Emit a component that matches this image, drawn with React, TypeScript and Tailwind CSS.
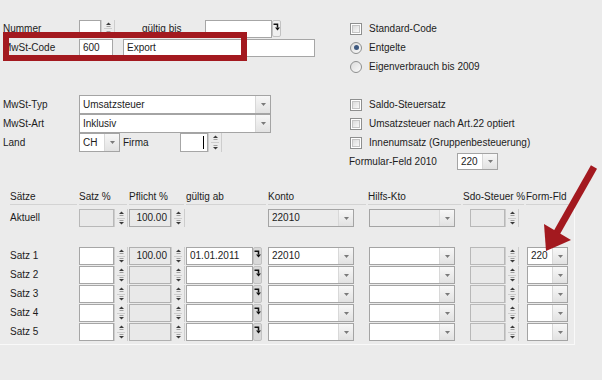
import React from 'react'

const RED = '#a3191f'

function Up() {
  return (
    <svg width="7" height="5" viewBox="0 0 7 5" className="block">
      <path d="M3.5 0.5 L6 3 H1 Z" fill="#3a3a3a" />
      <path d="M1.5 4.5 H5.5" stroke="#a0a0a0" strokeWidth="1" />
    </svg>
  )
}

function Down() {
  return (
    <svg width="7" height="5" viewBox="0 0 7 5" className="block">
      <path d="M1.5 0.5 H5.5" stroke="#a0a0a0" strokeWidth="1" />
      <path d="M1 2 H6 L3.5 4.5 Z" fill="#3a3a3a" />
    </svg>
  )
}

function Spin({ className = 'h-[18px]' }: { className?: string }) {
  return (
    <div className={`w-[14px] shrink-0 flex flex-col border-x border-[#cdcdcd] ${className}`}>
      <div className="flex-1 flex items-center justify-center">
        <Up />
      </div>
      <div className="mx-[2px] border-t border-[#cdcdcd]" />
      <div className="flex-1 flex items-center justify-center">
        <Down />
      </div>
    </div>
  )
}

function Box({ className, children }: { className: string; children?: React.ReactNode }) {
  return <div className={`h-[18px] shrink-0 flex items-center border px-[3px] ${className}`}>{children}</div>
}

function Combo({ className, value, disabled }: { className: string; value?: string; disabled?: boolean }) {
  return (
    <div className={`flex shrink-0 border border-[#a4a4a4] ${disabled ? 'bg-[#ebebeb]' : 'bg-white'} ${className}`}>
      <div className="flex-1 flex items-center pl-[3px]">{value}</div>
      <div className="w-[15px] flex items-center justify-center border-l border-[#d8d8d8] bg-linear-to-b from-[#f7f7f7] to-[#e2e2e2]">
        <svg width="5" height="3" viewBox="0 0 5 3">
          <path d="M0 0 H5 L2.5 3 Z" fill="#7a7a7a" />
        </svg>
      </div>
    </div>
  )
}

function DateBtn({ className }: { className: string }) {
  return (
    <div className={`w-[9px] shrink-0 rounded-[2px] bg-[#d9d9d9] border border-[#c2c2c2] flex justify-center pt-[2px] ${className}`}>
      <svg width="7" height="8" viewBox="0 0 7 8" className="block">
        <path d="M0.5 1.25 H4.5 V4.5" stroke="#111" strokeWidth="1.5" fill="none" />
        <path d="M2 4.5 H7 L4.5 7.5 Z" fill="#111" />
      </svg>
    </div>
  )
}

function Check() {
  return (
    <div className="w-[12px] h-[12px] shrink-0 border border-[#8e8f8f] bg-white p-[1px]">
      <div className="w-full h-full border border-[#c4c4c4] bg-linear-to-br from-[#dcdcdc] to-[#f8f8f8]" />
    </div>
  )
}

function Radio({ on }: { on?: boolean }) {
  return (
    <div className="w-[12px] h-[12px] shrink-0 rounded-full border border-[#8e8f8f] bg-linear-to-br from-[#dcdcdc] to-[#fafafa] flex items-center justify-center">
      {on && <div className="w-[5px] h-[5px] rounded-full bg-[#3d587f]" />}
    </div>
  )
}

const satzRows = [1, 2, 3, 4, 5]

export default function App() {
  return (
    <div className="relative w-[602px] h-[380px] overflow-hidden bg-[#ebebeb] text-[10px] leading-none text-[#1c1c1c] font-['Liberation_Sans',Arial,sans-serif]">
      {/* Kopf: Nummer / Code */}
      <div className="mt-[19px] flex">
        <div className="w-[350px] shrink-0 flex flex-col">
          <div className="h-[19px] flex items-center">
            <span className="w-[79px] pl-[3px] shrink-0">Nummer</span>
            <Box className="w-[22px] h-[17px] bg-white border-[#a6a6a6]" />
            <Spin className="h-[17px]" />
            <span className="ml-[27px] w-[63px] shrink-0">gültig bis</span>
            <Box className="w-[67px] h-[17px] bg-white border-[#a6a6a6]" />
            <DateBtn className="h-[17px] bg-[#f0f0f0]" />
          </div>
          <div className="h-[19px] flex items-center">
            <span className="w-[79px] pl-[3px] shrink-0">MwSt-Code</span>
            <Box className="w-[34px] bg-white border-[#a6a6a6]">600</Box>
            <Box className="ml-[10px] w-[192px] bg-white border-[#a6a6a6]">Export</Box>
          </div>
          <div className="h-[19px]" />
        </div>
        <div className="flex flex-col">
          <div className="h-[19px] flex items-center gap-[7px]">
            <Check />
            <span>Standard-Code</span>
          </div>
          <div className="h-[19px] flex items-center gap-[7px]">
            <Radio on />
            <span>Entgelte</span>
          </div>
          <div className="h-[19px] flex items-center gap-[7px]">
            <Radio />
            <span>Eigenverbrauch bis 2009</span>
          </div>
        </div>
      </div>

      {/* Typ / Art / Land */}
      <div className="mt-[19px] flex">
        <div className="w-[350px] shrink-0 flex flex-col">
          <div className="h-[19px] flex items-center">
            <span className="w-[79px] pl-[3px] shrink-0">MwSt-Typ</span>
            <Combo className="w-[192px] h-[19px]" value="Umsatzsteuer" />
          </div>
          <div className="h-[19px] flex items-center">
            <span className="w-[79px] pl-[3px] shrink-0">MwSt-Art</span>
            <Combo className="w-[192px] h-[19px]" value="Inklusiv" />
          </div>
          <div className="h-[19px] flex items-center">
            <span className="w-[79px] pl-[3px] shrink-0">Land</span>
            <Combo className="w-[41px] h-[19px]" value="CH" />
            <span className="ml-[3px] w-[57px] shrink-0">Firma</span>
            <Box className="w-[28px] h-[19px] bg-white border-[#a6a6a6] justify-end">
              <span className="w-[1px] h-[13px] bg-black" />
            </Box>
            <Spin className="h-[19px]" />
          </div>
          <div className="h-[19px]" />
        </div>
        <div className="flex flex-col">
          <div className="h-[19px] flex items-center gap-[7px]">
            <Check />
            <span>Saldo-Steuersatz</span>
          </div>
          <div className="h-[19px] flex items-center gap-[7px]">
            <Check />
            <span>Umsatzsteuer nach Art.22 optiert</span>
          </div>
          <div className="h-[19px] flex items-center gap-[7px]">
            <Check />
            <span>Innenumsatz (Gruppenbesteuerung)</span>
          </div>
          <div className="h-[19px] flex items-center -ml-[1px]">
            <span className="w-[108px] shrink-0">Formular-Feld 2010</span>
            <Combo className="w-[41px] h-[17px]" value="220" />
          </div>
        </div>
      </div>

      {/* Sätze */}
      <div className="mt-[19px] flex h-[15px] whitespace-nowrap">
        <div className="ml-[10px] w-[67px] border-b border-[#d3d3d3] flex items-center">Sätze</div>
        <div className="ml-[2px] w-[48px] border-b border-[#d3d3d3] flex items-center">Satz %</div>
        <div className="ml-[2px] w-[55px] border-b border-[#d3d3d3] flex items-center">Pflicht %</div>
        <div className="ml-[2px] w-[80px] border-b border-[#d3d3d3] flex items-center">gültig ab</div>
        <div className="ml-[2px] w-[98px] border-b border-[#d3d3d3] flex items-center">Konto</div>
        <div className="ml-[2px] w-[93px] border-b border-[#d3d3d3] flex items-center">Hilfs-Kto</div>
        <div className="ml-[2px] w-[61px] border-b border-[#d3d3d3] flex items-center">Sdo-Steuer %</div>
        <div className="ml-[2px] w-[46px] border-b border-[#d3d3d3] flex items-center">Form-Fld</div>
      </div>

      <div className="w-[575px] pt-[4px] pb-[3px] border-r border-b border-[#f9f9f9]">
        <div className="flex h-[18px]">
          <div className="w-[79px] pl-[10px] shrink-0 flex items-center">Aktuell</div>
          <Box className="w-[35px] bg-[#e9e9e9] border-[#b8b8b8]" />
          <Spin />
          <Box className="ml-[1px] w-[42px] bg-[#e9e9e9] border-[#a9a9a9] justify-end">100.00</Box>
          <Spin />
          <div className="w-[77px] shrink-0" />
          <Combo className="ml-[6px] w-[86px] h-[18px]" value="22010" disabled />
          <Combo className="ml-[15px] w-[86px] h-[18px]" disabled />
          <Box className="ml-[15px] w-[35px] bg-[#e9e9e9] border-[#b8b8b8]" />
          <Spin />
        </div>

        <div className="mt-[20px] flex flex-col gap-[1px]">
          {satzRows.map((n) => (
            <div key={n} className="flex h-[18px]">
              <div className="w-[79px] pl-[10px] shrink-0 flex items-center">Satz {n}</div>
              <Box className="w-[35px] bg-white border-[#a6a6a6]" />
              <Spin />
              <Box className="ml-[1px] w-[42px] bg-[#e9e9e9] border-[#b0b0b0] justify-end">{n === 1 ? '100.00' : ''}</Box>
              <Spin />
              <Box className="ml-[1px] w-[67px] bg-white border-[#a6a6a6]">{n === 1 ? '01.01.2011' : ''}</Box>
              <DateBtn className="h-[18px]" />
              <Combo className="ml-[6px] w-[86px] h-[18px]" value={n === 1 ? '22010' : ''} />
              <Combo className="ml-[15px] w-[86px] h-[18px]" />
              <Box className="ml-[15px] w-[35px] bg-[#e9e9e9] border-[#b8b8b8]" />
              <Spin />
              <Combo className="ml-[8px] w-[41px] h-[18px]" value={n === 1 ? '220' : ''} />
            </div>
          ))}
        </div>
      </div>

      {/* Markierungen */}
      <div className="absolute left-[3px] top-[32px] w-[244px] h-[29px] border-[6px] border-[#a3191f]" />
      <svg className="absolute left-0 top-0 pointer-events-none" width="602" height="380" viewBox="0 0 602 380">
        <line x1="594" y1="167" x2="556" y2="234" stroke={RED} strokeWidth="7" />
        <polygon points="546,251 544,224 571,240" fill={RED} />
      </svg>
    </div>
  )
}
